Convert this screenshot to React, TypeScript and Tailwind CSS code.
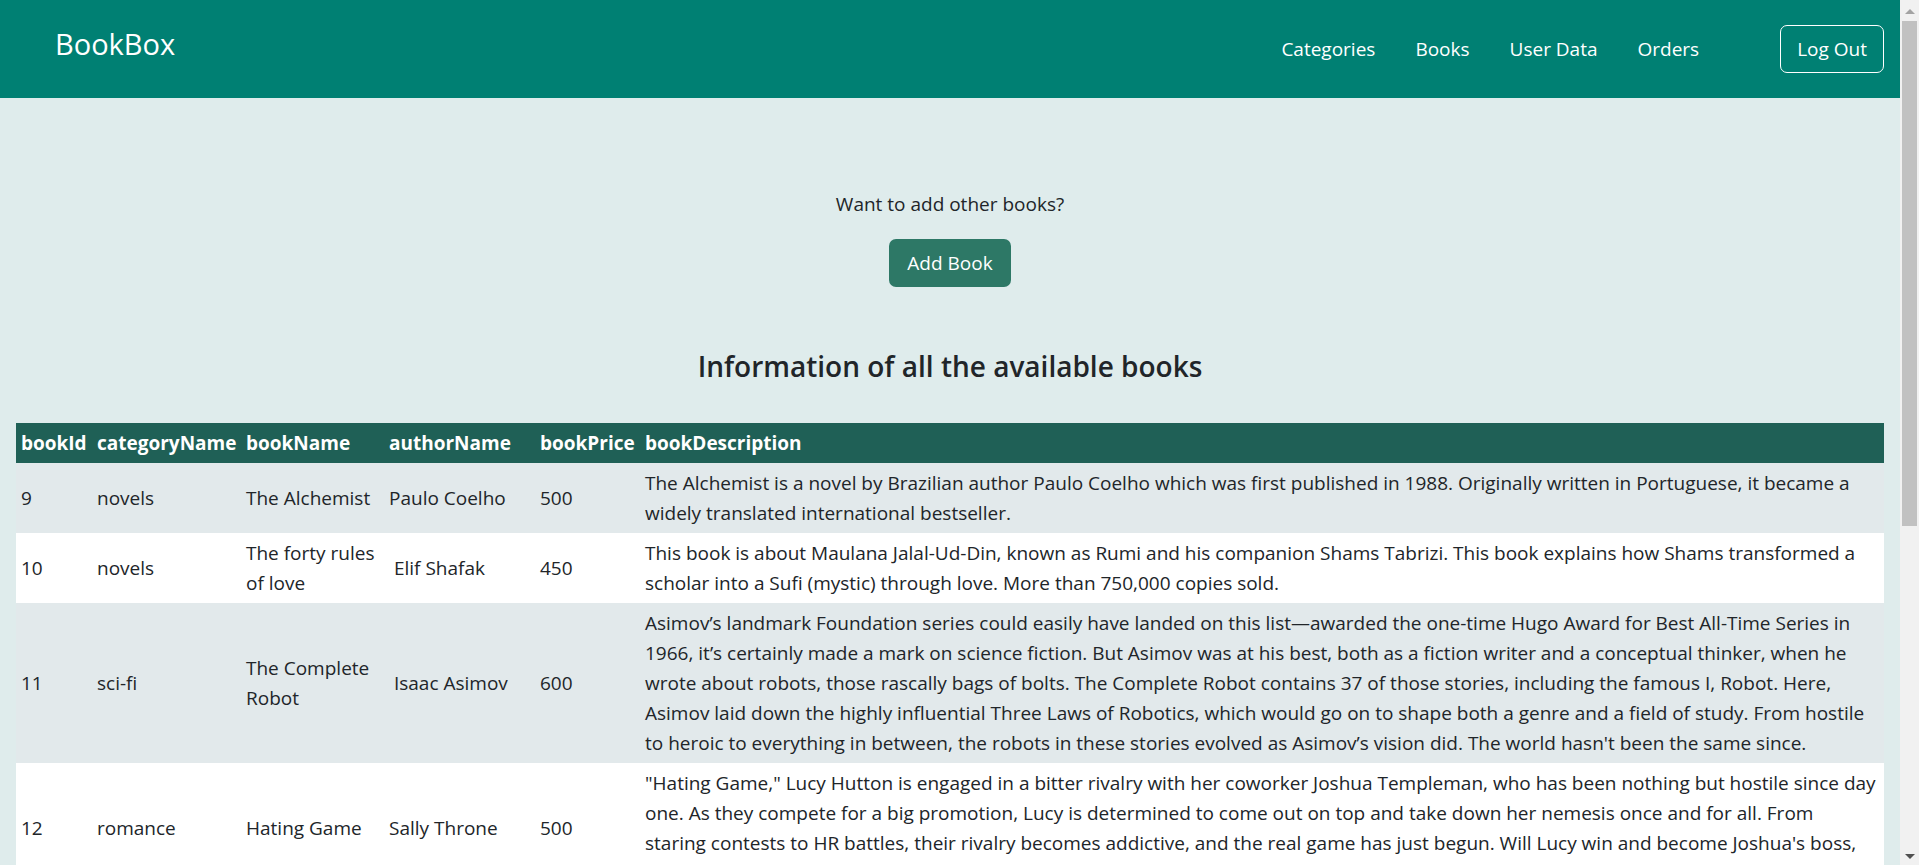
import React from "react";

type Book = {
  id: number;
  category: string;
  name: string;
  author: string;
  price: number;
  description: string;
};

const books: Book[] = [
  {
    id: 9,
    category: "novels",
    name: "The Alchemist",
    author: "Paulo Coelho",
    price: 500,
    description:
      "The Alchemist is a novel by Brazilian author Paulo Coelho which was first published in 1988. Originally written in Portuguese, it became a widely translated international bestseller.",
  },
  {
    id: 10,
    category: "novels",
    name: "The forty rules of love",
    author: "\u00a0Elif Shafak",
    price: 450,
    description:
      "This book is about Maulana Jalal-Ud-Din, known as Rumi and his companion Shams Tabrizi. This book explains how Shams transformed a scholar into a Sufi (mystic) through love. More than 750,000 copies sold.",
  },
  {
    id: 11,
    category: "sci-fi",
    name: "The Complete Robot",
    author: "\u00a0Isaac Asimov",
    price: 600,
    description:
      "Asimov\u2019s landmark Foundation series could easily have landed on this list\u2014awarded the one-time Hugo Award for Best All-Time Series in 1966, it\u2019s certainly made a mark on science fiction. But Asimov was at his best, both as a fiction writer and a conceptual thinker, when he wrote about robots, those rascally bags of bolts. The Complete Robot contains 37 of those stories, including the famous I, Robot. Here, Asimov laid down the highly influential Three Laws of Robotics, which would go on to shape both a genre and a field of study. From hostile to heroic to everything in between, the robots in these stories evolved as Asimov\u2019s vision did. The world hasn't been the same since.",
  },
  {
    id: 12,
    category: "romance",
    name: "Hating Game",
    author: "Sally Throne",
    price: 500,
    description:
      "\"Hating Game,\" Lucy Hutton is engaged in a bitter rivalry with her coworker Joshua Templeman, who has been nothing but hostile since day one. As they compete for a big promotion, Lucy is determined to come out on top and take down her nemesis once and for all. From staring contests to HR battles, their rivalry becomes addictive, and the real game has just begun. Will Lucy win and become Joshua's boss, or will the line between love and hate finally blur?",
  },
];

const navLinks = ["Categories", "Books", "User Data", "Orders"];

// window scrollbar as it appears in the screenshot
function ScrollStrip() {
  return (
    <div className="flex h-[865px] w-[19px] shrink-0 flex-col items-center bg-[#f1f1f1]">
      <div className="mt-[9px] h-0 w-0 border-x-[5px] border-b-[5px] border-x-transparent border-b-[#a3a3a3]" />
      <div className="mt-[7px] h-[505px] w-[15px] bg-[#c1c1c1]" />
      <div className="mt-auto mb-[6px] h-0 w-0 border-x-[5px] border-t-[5px] border-x-transparent border-t-[#505050]" />
    </div>
  );
}

export default function App() {
  return (
    <div className="flex items-start bg-[#dfecec] font-['Open_Sans',sans-serif] text-[19px] leading-[30px] text-[#212529]">
      <div className="min-w-0 flex-1">
        <nav className="flex h-[98px] items-center bg-[#008073] pl-[55px] pr-[16px] text-white">
          <span className="mb-[10px] text-[29px] leading-[40px] font-medium">BookBox</span>
          <ul className="ml-auto flex gap-[40px]">
            {navLinks.map((l) => (
              <li key={l}>
                <a href="#" className="text-white">
                  {l}
                </a>
              </li>
            ))}
          </ul>
          <button className="ml-[81px] rounded-[7px] border border-white px-[16px] py-[8px] text-white">
            Log Out
          </button>
        </nav>

        <main className="flex flex-col items-center pt-[91px] pb-[40px]">
          <p>Want to add other books?</p>
          <button className="mt-[20px] rounded-[7px] bg-[#2d7866] px-[18px] py-[9px] text-white">
            Add Book
          </button>
          <h3 className="mt-[62px] text-[28px] leading-[34px] font-semibold">
            Information of all the available books
          </h3>

          <div className="mt-[40px] w-full px-[16px]">
            <table className="w-full table-fixed border-collapse">
              <colgroup>
                <col className="w-[76px]" />
                <col className="w-[149px]" />
                <col className="w-[143px]" />
                <col className="w-[151px]" />
                <col className="w-[105px]" />
                <col />
              </colgroup>
              <thead>
                <tr className="bg-[#1f6056] text-left text-white">
                  <th className="px-[5px] py-[5px]">bookId</th>
                  <th className="px-[5px] py-[5px]">categoryName</th>
                  <th className="px-[5px] py-[5px]">bookName</th>
                  <th className="px-[5px] py-[5px]">authorName</th>
                  <th className="px-[5px] py-[5px]">bookPrice</th>
                  <th className="px-[5px] py-[5px]">bookDescription</th>
                </tr>
              </thead>
              <tbody>
                {books.map((b, i) => (
                  <tr key={b.id} className={i % 2 === 0 ? "bg-[#e2e9eb]" : "bg-white"}>
                    <td className="px-[5px] py-[5px] align-middle">{b.id}</td>
                    <td className="px-[5px] py-[5px] align-middle">{b.category}</td>
                    <td className="px-[5px] py-[5px] align-middle">{b.name}</td>
                    <td className="px-[5px] py-[5px] align-middle">{b.author}</td>
                    <td className="px-[5px] py-[5px] align-middle">{b.price}</td>
                    <td className="px-[5px] py-[5px] align-middle">{b.description}</td>
                  </tr>
                ))}
              </tbody>
            </table>
          </div>
        </main>
      </div>
      <ScrollStrip />
    </div>
  );
}
